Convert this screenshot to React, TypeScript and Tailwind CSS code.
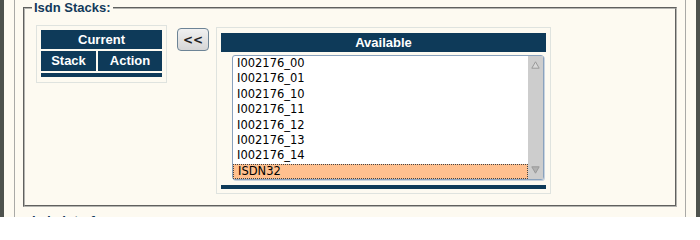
import React from "react";

const ITEMS = [
  "I002176_00",
  "I002176_01",
  "I002176_10",
  "I002176_11",
  "I002176_12",
  "I002176_13",
  "I002176_14",
  "ISDN32",
];

const SELECTED = "ISDN32";

export default function App() {
  return (
    <div className="h-[217px] w-[700px] overflow-hidden bg-[#4e524d] px-[4px]">
      <div className="h-full bg-[#fdfaf1] px-[10px]">
        <div className="h-full border-x border-[#a9a9a6] px-[8px] font-['Liberation_Sans',Arial,sans-serif]">
          {/* Isdn Stacks */}
          <fieldset className="h-[207px] border-2 border-[#b4b4b0] [border-style:groove]">
            <legend className="ml-[7px] px-[2px] text-[13px] leading-[16px] font-bold text-[#12395a]">
              Isdn Stacks:
            </legend>
            <div className="ml-[11px] mt-[9px] flex items-start">
              <CurrentTable />
              <button className="ml-[10px] mt-[3px] h-[23px] w-[32px] rounded-[4px] border border-[#6d8496] bg-gradient-to-b from-[#f1f1f1] to-[#d6d6d6] font-['DejaVu_Sans',sans-serif] text-[12px] font-bold leading-none text-[#222]">
                &lt;&lt;
              </button>
              <AvailableList />
            </div>
          </fieldset>

          {/* next section, cut by the window */}
          <div className="ml-[9px] mt-[6px] text-[13px] leading-[16px] font-bold text-[#12395a]">
            Isdn Interfaces:
          </div>
        </div>
      </div>
    </div>
  );
}

function CurrentTable() {
  return (
    <div className="w-[131px] border border-[#dfe3df] px-[4px] pt-[4px] pb-[5px]">
      <div className="grid grid-cols-[55px_64px] gap-[2px] text-[13px] font-bold text-white">
        <div className="col-span-2 flex h-[19px] items-center justify-center bg-[#0e3a59]">Current</div>
        <div className="flex h-[20px] items-center justify-center bg-[#0e3a59]">Stack</div>
        <div className="flex h-[20px] items-center justify-center bg-[#0e3a59]">Action</div>
        <div className="col-span-2 h-[4px] bg-[#0e3a59]" />
      </div>
    </div>
  );
}

function AvailableList() {
  return (
    <div className="ml-[7px] mt-[2px] w-[335px] border border-[#dfe3df] px-[4px] pt-[5px] pb-[4px]">
      <div className="flex h-[19px] items-center justify-center bg-[#0e3a59] text-[13px] font-bold text-white">
        Available
      </div>
      <div className="ml-[11px] mt-[3px] flex h-[125px] w-[312px] rounded-[3px] border border-[#8aa2bd] bg-white shadow-[1px_1px_0_#c9d3de]">
        <div className="flex-1 font-['DejaVu_Sans',sans-serif] text-[11.5px] text-black">
          {ITEMS.map((item) => (
            <div
              key={item}
              className={`flex h-[15.375px] items-center pl-[4px] ${
                item === SELECTED ? "border border-dotted border-[#444] bg-[#ffc08f] pl-[3px]" : ""
              }`}
            >
              {item}
            </div>
          ))}
        </div>
        <div className="flex w-[15px] flex-col items-center justify-between bg-[#cdcdcd] py-[5px]">
          <svg width="9" height="8" viewBox="0 0 9 8">
            <path d="M4.5 0.8 L8.2 7.2 H0.8 Z" fill="#d8d8d8" stroke="#9a9a9a" strokeWidth="1" />
          </svg>
          <svg width="9" height="8" viewBox="0 0 9 8">
            <path d="M0.8 0.8 H8.2 L4.5 7.2 Z" fill="#b0b0b0" stroke="#9a9a9a" strokeWidth="1" />
          </svg>
        </div>
      </div>
      <div className="mt-[5px] h-[4px] bg-[#0e3a59]" />
    </div>
  );
}
